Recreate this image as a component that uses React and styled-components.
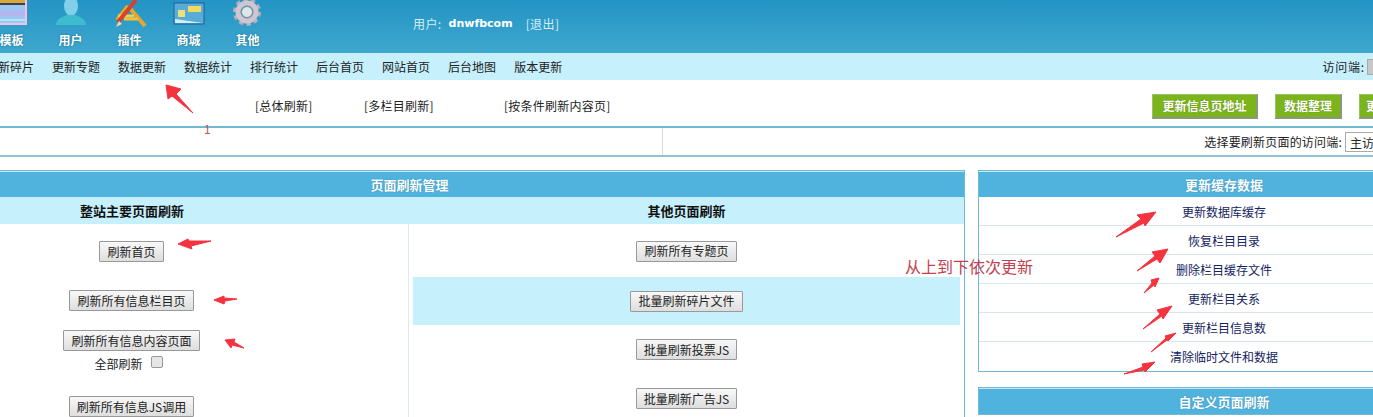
import styled, { createGlobalStyle } from "styled-components";

const GlobalStyle = createGlobalStyle`
  html, body {
    margin: 0;
    width: 1373px;
    height: 417px;
    overflow: hidden;
    background: #fff;
  }
`;

const Viewport = styled.div`
  position: relative;
  width: 1373px;
  height: 417px;
  overflow: hidden;
  font: 12px/16px "Noto Sans CJK SC", "Liberation Sans", sans-serif;
  color: #222;
`;
const Page = styled.div`
  width: 1616px;
  margin-left: -146px;
`;
const Header = styled.header`
  display: flex;
  height: 53px;
  padding-left: 128px;
  overflow: hidden;
  background: linear-gradient(#2394c4, #3fa7ce);
`;
const Module = styled.div`
  display: flex;
  flex-direction: column;
  align-items: center;
  width: 59px;
  height: 53px;
`;
const ModuleIcon = styled.svg`
  display: block;
  width: 36px;
  height: 32px;
`;
const ModuleLabel = styled.span`
  font-weight: 700;
  color: #fff;
  line-height: 16px;
  text-shadow: 0 0 2px #14607f;
`;
const UserInfo = styled.div`
  display: flex;
  align-items: center;
  gap: 4px;
  height: 47px;
  margin-left: 136px;
  letter-spacing: 0.4px;
  color: #d7eef7;
`;
const UserName = styled.b`
  margin: 0 9px 0 3px;
  font-family: "DejaVu Sans", sans-serif;
  font-size: 11px;
  letter-spacing: 0;
  color: #fff;
`;
const NavBar = styled.nav`
  display: flex;
  justify-content: space-between;
  align-items: center;
  height: 27px;
  padding: 0 43px 0 132px;
  background: #c6f0fc;
`;
const NavLinks = styled.div`
  display: flex;
  gap: 18px;
`;
const NavClient = styled.div`
  display: flex;
  align-items: center;
  gap: 2px;
  letter-spacing: 0.8px;
`;
const ClientBox = styled.span`
  width: 60px;
  height: 16px;
  background: #c8c8c8;
  border: 1px solid #aaa;
  box-sizing: border-box;
`;
const ToolBar = styled.div`
  display: flex;
  justify-content: space-between;
  align-items: center;
  height: 48px;
  padding: 6px 0 0 401px;
  box-sizing: border-box;
  border-bottom: 2px solid #6fb9d2;
`;
const ToolLinks = styled.div`
  display: grid;
  grid-template-columns: 109px 140px auto;
  letter-spacing: 0.25px;
`;
const ToolButtons = styled.div`
  display: flex;
  gap: 17px;
`;
const GreenButton = styled.button`
  box-sizing: border-box;
  width: ${props => props.$width}px;
  height: 25px;
  padding: 0;
  font: 700 12px/1 "Noto Sans CJK SC", sans-serif;
  color: #fff;
  white-space: nowrap;
  background: #7cb51b;
  border: 1px solid #9bbf62;
  border-right: 2px solid #8b9880;
  border-bottom: 2px solid #8b9880;
  text-shadow: 0 0 1px #4f7a08;
`;
const SelectRow = styled.div`
  display: flex;
  height: 29px;
  box-sizing: border-box;
  border-bottom: 2px solid #8fc3d4;
`;
const SelectBlank = styled.div`
  width: 808px;
  border-right: 1px solid #dcdcdc;
`;
const SelectCell = styled.div`
  flex: 1;
  display: flex;
  justify-content: flex-end;
  align-items: center;
  gap: 3px;
  padding-right: 45px;
  letter-spacing: 0.2px;
`;
const ClientSelect = styled.select`
  width: 80px;
  height: 20px;
  padding: 0;
  font: 12px "Noto Sans CJK SC", sans-serif;
  color: #222;
  background: #fff;
  border: 1px solid #aaa;
`;
const Panels = styled.div`
  display: grid;
  grid-template-columns: 1111px 492px;
  gap: 13px;
  align-items: start;
  margin-top: 13px;
`;
const RightStack = styled.div`
  display: flex;
  flex-direction: column;
  gap: 15px;
`;
const Panel = styled.section`
  border: 1px solid #6fb9d2;
  background: #fff;
`;
const PanelTitle = styled.h2`
  height: 25px;
  margin: 0;
  font-size: 13px;
  font-weight: 700;
  line-height: 25px;
  text-align: center;
  color: #fff;
  background: #4fb3de;
  border-top: 1px solid #c9e8f3;
  text-shadow: 0 0 1px #23769b;
`;
const ColumnHeads = styled.div`
  display: grid;
  grid-template-columns: 554px 1fr;
  height: 27px;
  background: #c6f0fc;
`;
const ColumnHead = styled.h3`
  margin: 0;
  font-size: 13px;
  font-weight: 700;
  line-height: 27px;
  text-align: center;
  color: #111;
`;
const Columns = styled.div`
  display: grid;
  grid-template-columns: 554px 1fr;
  height: 240px;
`;
const LeftColumn = styled.div`
  display: flex;
  flex-direction: column;
  align-items: center;
  padding-top: 17px;
  border-right: 1px solid #dcebf0;
`;
const LeftRow = styled.div`
  display: flex;
  flex-direction: column;
  align-items: center;
  height: ${props => props.$height}px;
`;
const RightColumn = styled.div`
  display: flex;
  flex-direction: column;
  padding: 1px 4px 0;
`;
const RightRow = styled.div`
  display: flex;
  justify-content: center;
  align-items: center;
  flex: none;
  height: ${props => props.$height}px;
  background: ${props => (props.$active ? "#c6f0fc" : "transparent")};
`;
const RefreshButton = styled.button`
  height: 21px;
  padding: 0 7px;
  font: 12px/1 "Noto Sans CJK SC", sans-serif;
  color: #222;
  white-space: nowrap;
  background: linear-gradient(#f8f8f8, #dedede);
  border: 1px solid #999;
  border-radius: 1px;
`;
const CheckLine = styled.label`
  display: flex;
  align-items: flex-start;
  gap: 8px;
  margin: 5px 6px 0 0;
`;
const FakeCheck = styled.span`
  width: 10px;
  height: 10px;
  background: #e6e6e6;
  border: 1px solid #999;
  border-radius: 2px;
`;
const CacheRow = styled.div`
  height: 28px;
  line-height: 30px;
  text-align: center;
  color: #14245f;
  border-bottom: 1px solid #d5e7ed;
  &:last-child {
    height: 29px;
    border-bottom: 0;
  }
`;
const Overlay = styled.svg`
  position: absolute;
  inset: 0;
  width: 1373px;
  height: 417px;
  pointer-events: none;
`;
const Arrow = styled.polygon`
  fill: #f5333f;
  stroke: #f5333f;
  stroke-width: 1;
  stroke-linejoin: round;
`;
const StepNumber = styled.span`
  position: absolute;
  left: 204px;
  top: 121px;
  color: #c8505c;
`;
const Note = styled.span`
  position: absolute;
  left: 905px;
  top: 255px;
  font-size: 16px;
  line-height: 22px;
  color: #c2404f;
`;

const modules = [
  {
    label: "模板",
    icon: (
      <>
        <rect x="0" y="0" width="33" height="25" fill="#efc4e2" />
        <rect x="0" y="0" width="31" height="3" fill="#d9a83a" />
        <rect x="0" y="3" width="31" height="2" fill="#3c3f5c" />
        <rect x="0" y="5" width="31" height="18" fill="#9cc6f4" />
        <rect x="0" y="11" width="31" height="5" fill="#b5b6f0" />
        <rect x="0" y="19" width="31" height="2" fill="#b4e3f4" />
      </>
    ),
  },
  {
    label: "用户",
    icon: (
      <>
        <ellipse cx="18" cy="6" rx="7" ry="10" fill="#7fd0e8" />
        <path d="M3 25c0-6 6-8 11-10h8c5 2 11 4 11 10z" fill="#3dbcd0" />
      </>
    ),
  },
  {
    label: "插件",
    icon: (
      <>
        <path d="M16 6 5 20M16 6l17 20" fill="none" stroke="#e6a82c" strokeWidth="4" />
        <path d="M6 16h16" stroke="#f0d050" strokeWidth="3" />
        <path d="M12 19h14" stroke="#f3c23a" strokeWidth="3" />
        <path d="M24 0 6 22" stroke="#d8402c" strokeWidth="4" />
        <path d="M7 21 4 27l6-3z" fill="#f3d9a0" />
      </>
    ),
  },
  {
    label: "商城",
    icon: (
      <>
        <rect x="3" y="3" width="30" height="21" fill="#59acd8" stroke="#1f5f9c" />
        <rect x="17" y="6" width="13" height="6" fill="#f0d95c" />
        <rect x="7" y="10" width="7" height="7" fill="#e8e27a" />
        <path d="M4 19l28 4H4z" fill="#d3ecf5" />
      </>
    ),
  },
  {
    label: "其他",
    icon: (
      <>
        <circle cx="17" cy="12" r="12" fill="none" stroke="#b8aebc" strokeWidth="4" strokeDasharray="4.2 3.3" />
        <circle cx="17" cy="12" r="9" fill="none" stroke="#cfc6d2" strokeWidth="5" />
        <circle cx="17" cy="12" r="5.5" fill="#dde7ea" stroke="#8f8794" />
      </>
    ),
  },
];

const navLinks = ["更新碎片", "更新专题", "数据更新", "数据统计", "排行统计", "后台首页", "网站首页", "后台地图", "版本更新"];
const cacheRows = ["更新数据库缓存", "恢复栏目目录", "删除栏目缓存文件", "更新栏目关系", "更新栏目信息数", "清除临时文件和数据"];
const rightRows = [
  { text: "刷新所有专题页", height: 52 },
  { text: "批量刷新碎片文件", height: 48, active: true },
  { text: "批量刷新投票JS", height: 49 },
  { text: "批量刷新广告JS", height: 49 },
];
const arrows = [
  "166,85 181,89 176,94 193,113 172,96 168,99",
  "178,244 188,239 189,241 211,241 191,246 192,249",
  "214,300 224,296 224,298 237,299 225,301 224,304",
  "225,340 235,339 234,342 244,348 232,345 231,348",
  "1156,212 1137,215 1141,219 1116,237 1144,223 1145,226",
  "1168,249 1152,252 1155,256 1137,271 1157,259 1160,263",
  "1159,278 1151,280 1152,283 1144,293 1154,285 1155,287",
  "1172,306 1157,310 1160,314 1143,329 1162,316 1163,319",
  "1176,333 1165,336 1166,338 1151,352 1167,340 1168,341",
  "1155,362 1142,364 1143,367 1124,374 1144,370 1145,372",
];

export default function App() {
  return (
    <Viewport>
      <GlobalStyle />
      <Page>
        <Header>
          {modules.map(item => (
            <Module key={item.label}>
              <ModuleIcon viewBox="0 0 36 32">{item.icon}</ModuleIcon>
              <ModuleLabel>{item.label}</ModuleLabel>
            </Module>
          ))}
          <UserInfo>
            用户:
            <UserName>dnwfbcom</UserName>
            [退出]
          </UserInfo>
        </Header>
        <NavBar>
          <NavLinks>
            {navLinks.map(link => (
              <span key={link}>{link}</span>
            ))}
          </NavLinks>
          <NavClient>
            访问端:
            <ClientBox />
          </NavClient>
        </NavBar>
        <ToolBar>
          <ToolLinks>
            <span>[总体刷新]</span>
            <span>[多栏目刷新]</span>
            <span>[按条件刷新内容页]</span>
          </ToolLinks>
          <ToolButtons>
            <GreenButton $width={106}>更新信息页地址</GreenButton>
            <GreenButton $width={67}>数据整理</GreenButton>
            <GreenButton $width={111}>更新首页栏目缓存</GreenButton>
          </ToolButtons>
        </ToolBar>
        <SelectRow>
          <SelectBlank />
          <SelectCell>
            选择要刷新页面的访问端:
            <ClientSelect defaultValue="主访问端">
              <option>主访问端</option>
            </ClientSelect>
          </SelectCell>
        </SelectRow>
        <Panels>
          <Panel>
            <PanelTitle>页面刷新管理</PanelTitle>
            <ColumnHeads>
              <ColumnHead>整站主要页面刷新</ColumnHead>
              <ColumnHead>其他页面刷新</ColumnHead>
            </ColumnHeads>
            <Columns>
              <LeftColumn>
                <LeftRow $height={49}>
                  <RefreshButton>刷新首页</RefreshButton>
                </LeftRow>
                <LeftRow $height={40}>
                  <RefreshButton>刷新所有信息栏目页</RefreshButton>
                </LeftRow>
                <LeftRow $height={66}>
                  <RefreshButton>刷新所有信息内容页面</RefreshButton>
                  <CheckLine>
                    全部刷新
                    <FakeCheck />
                  </CheckLine>
                </LeftRow>
                <LeftRow $height={30}>
                  <RefreshButton>刷新所有信息JS调用</RefreshButton>
                </LeftRow>
              </LeftColumn>
              <RightColumn>
                {rightRows.map(row => (
                  <RightRow key={row.text} $height={row.height} $active={row.active}>
                    <RefreshButton>{row.text}</RefreshButton>
                  </RightRow>
                ))}
              </RightColumn>
            </Columns>
          </Panel>
          <RightStack>
            <Panel>
              <PanelTitle>更新缓存数据</PanelTitle>
              {cacheRows.map(row => (
                <CacheRow key={row}>{row}</CacheRow>
              ))}
            </Panel>
            <Panel>
              <PanelTitle>自定义页面刷新</PanelTitle>
            </Panel>
          </RightStack>
        </Panels>
      </Page>
      <StepNumber>1</StepNumber>
      <Note>从上到下依次更新</Note>
      <Overlay viewBox="0 0 1373 417">
        {arrows.map(points => (
          <Arrow key={points} points={points} />
        ))}
      </Overlay>
    </Viewport>
  );
}
